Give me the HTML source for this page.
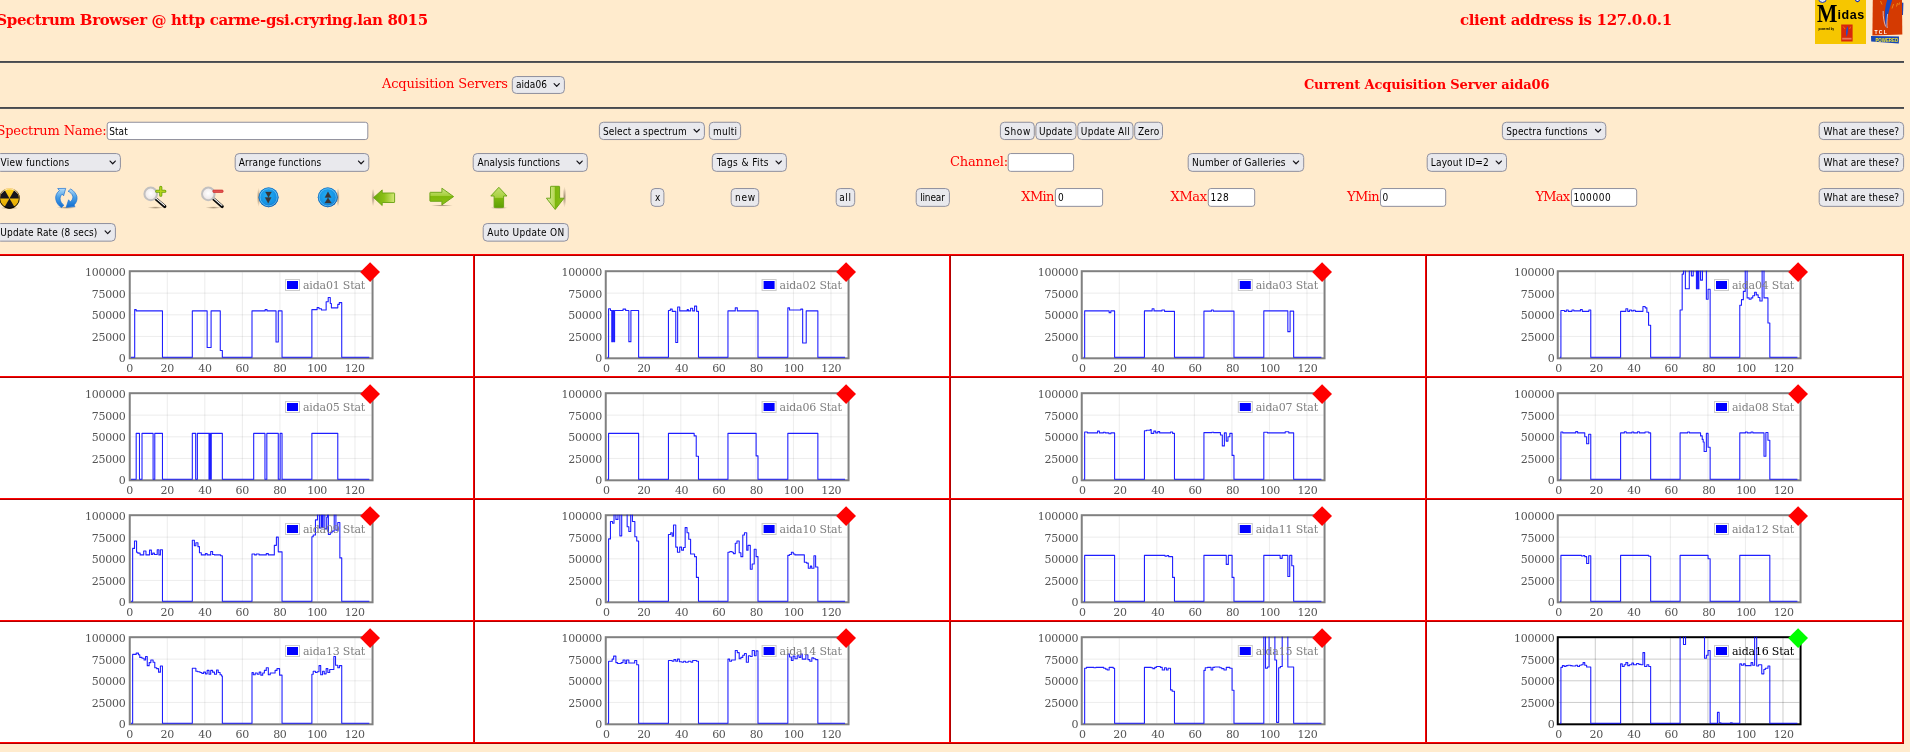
<!DOCTYPE html>
<html lang="en"><head><meta charset="utf-8"><title>Spectrum Browser</title>
<style>
html,body{margin:0;padding:0;}
body{background:#ffebcd;width:1910px;height:752px;overflow:hidden;position:relative;font-family:"DejaVu Serif","Liberation Serif",serif;color:#f00;}
.a{position:absolute;white-space:nowrap;}
.t{position:absolute;white-space:nowrap;color:#ff0000;font-family:"DejaVu Serif","Liberation Serif",serif;line-height:1;}
.hr{position:absolute;left:-4px;width:1907.8px;height:2px;background:linear-gradient(#48494d 50%,#55575b 50%);}
.c{position:absolute;box-sizing:border-box;}
.btn{background:#e9e9ed;border:1px solid #8f8f9d;border-radius:4px;}
.sel{background:#e9e9ed;border:1px solid #8f8f9d;border-radius:4px;}
.inp{background:#fff;border:1px solid #8f8f9d;border-radius:3px;}
.cell{position:absolute;background:#fff;}
.lab{position:absolute;font:11px "DejaVu Serif","Liberation Serif",serif;color:#545454;white-space:nowrap;line-height:13px;}
.leg{position:absolute;font:11px "DejaVu Serif","Liberation Serif",serif;white-space:nowrap;line-height:13px;}
</style></head><body>
<div id="wrap" style="position:absolute;left:0;top:0;width:1910px;height:752px;will-change:transform">

<div class="a" style="left:-3.7px;top:13px;font:bold 15px 'DejaVu Serif','Liberation Serif',serif;line-height:1;color:#ff0000;letter-spacing:-0.365px">Spectrum Browser @ http carme-gsi.cryring.lan 8015</div>
<div class="a" style="left:1459.9px;top:13px;font:bold 15px 'DejaVu Serif','Liberation Serif',serif;line-height:1;color:#ff0000;letter-spacing:-0.338px">client address is 127.0.0.1</div>
<div class="a" style="left:382px;top:77px;font:13px 'DejaVu Serif','Liberation Serif',serif;line-height:1;color:#ff0000;letter-spacing:-0.156px">Acquisition Servers</div>
<div class="a" style="left:1303.9px;top:78px;font:bold 13px 'DejaVu Serif','Liberation Serif',serif;line-height:1;color:#ff0000;letter-spacing:-0.131px">Current Acquisition Server aida06</div>
<div class="a" style="left:-3.6px;top:124px;font:13px 'DejaVu Serif','Liberation Serif',serif;line-height:1;color:#ff0000;letter-spacing:-0.138px">Spectrum Name:</div>
<div class="a" style="left:949.9px;top:155px;font:13px 'DejaVu Serif','Liberation Serif',serif;line-height:1;color:#ff0000;letter-spacing:-0.114px">Channel:</div>
<div class="a" style="left:1021.3px;top:190px;font:13px 'DejaVu Serif','Liberation Serif',serif;line-height:1;color:#ff0000;letter-spacing:-0.633px">XMin</div>
<div class="a" style="left:1170.5px;top:190px;font:13px 'DejaVu Serif','Liberation Serif',serif;line-height:1;color:#ff0000;letter-spacing:-0.367px">XMax</div>
<div class="a" style="left:1347.1px;top:190px;font:13px 'DejaVu Serif','Liberation Serif',serif;line-height:1;color:#ff0000;letter-spacing:-0.667px">YMin</div>
<div class="a" style="left:1535.4px;top:190px;font:13px 'DejaVu Serif','Liberation Serif',serif;line-height:1;color:#ff0000;letter-spacing:-0.767px">YMax</div>
<div class="hr" style="top:61px"></div>
<div class="hr" style="top:107px"></div>
<svg class="a" style="left:-4px;top:70px" width="1914" height="180" viewBox="-4 70 1914 180"><rect x="512.30" y="76.55" width="52.10" height="16.90" rx="4" fill="#e9e9ed" stroke="#8f8f9d" stroke-width="1"/><path d="M554.10 83.60 l2.6 2.7 l2.6 -2.7" fill="none" stroke="#15141a" stroke-width="1.2" stroke-linecap="round" stroke-linejoin="round"/><rect x="107.20" y="122.25" width="260.60" height="17.30" rx="2.5" fill="#fff" stroke="#8f8f9d" stroke-width="1"/><rect x="599.40" y="122.25" width="105.00" height="17.30" rx="4" fill="#e9e9ed" stroke="#8f8f9d" stroke-width="1"/><path d="M694.10 129.50 l2.6 2.7 l2.6 -2.7" fill="none" stroke="#15141a" stroke-width="1.2" stroke-linecap="round" stroke-linejoin="round"/><rect x="709.30" y="122.25" width="31.30" height="17.30" rx="4" fill="#e9e9ed" stroke="#8f8f9d" stroke-width="1"/><rect x="1000.40" y="122.25" width="33.90" height="17.30" rx="4" fill="#e9e9ed" stroke="#8f8f9d" stroke-width="1"/><rect x="1035.90" y="122.25" width="40.10" height="17.30" rx="4" fill="#e9e9ed" stroke="#8f8f9d" stroke-width="1"/><rect x="1077.80" y="122.25" width="55.20" height="17.30" rx="4" fill="#e9e9ed" stroke="#8f8f9d" stroke-width="1"/><rect x="1134.70" y="122.25" width="27.80" height="17.30" rx="4" fill="#e9e9ed" stroke="#8f8f9d" stroke-width="1"/><rect x="1502.40" y="122.25" width="103.40" height="17.30" rx="4" fill="#e9e9ed" stroke="#8f8f9d" stroke-width="1"/><path d="M1595.50 129.50 l2.6 2.7 l2.6 -2.7" fill="none" stroke="#15141a" stroke-width="1.2" stroke-linecap="round" stroke-linejoin="round"/><rect x="1819.20" y="122.25" width="84.40" height="17.30" rx="4" fill="#e9e9ed" stroke="#8f8f9d" stroke-width="1"/><rect x="-3.50" y="153.55" width="123.90" height="17.80" rx="4" fill="#e9e9ed" stroke="#8f8f9d" stroke-width="1"/><path d="M110.10 161.05 l2.6 2.7 l2.6 -2.7" fill="none" stroke="#15141a" stroke-width="1.2" stroke-linecap="round" stroke-linejoin="round"/><rect x="235.20" y="153.55" width="133.60" height="17.80" rx="4" fill="#e9e9ed" stroke="#8f8f9d" stroke-width="1"/><path d="M358.50 161.05 l2.6 2.7 l2.6 -2.7" fill="none" stroke="#15141a" stroke-width="1.2" stroke-linecap="round" stroke-linejoin="round"/><rect x="473.20" y="153.55" width="114.10" height="17.80" rx="4" fill="#e9e9ed" stroke="#8f8f9d" stroke-width="1"/><path d="M577.00 161.05 l2.6 2.7 l2.6 -2.7" fill="none" stroke="#15141a" stroke-width="1.2" stroke-linecap="round" stroke-linejoin="round"/><rect x="712.30" y="153.55" width="74.10" height="17.80" rx="4" fill="#e9e9ed" stroke="#8f8f9d" stroke-width="1"/><path d="M776.10 161.05 l2.6 2.7 l2.6 -2.7" fill="none" stroke="#15141a" stroke-width="1.2" stroke-linecap="round" stroke-linejoin="round"/><rect x="1008.20" y="153.55" width="65.40" height="17.80" rx="2.5" fill="#fff" stroke="#8f8f9d" stroke-width="1"/><rect x="1188.20" y="153.55" width="115.50" height="17.80" rx="4" fill="#e9e9ed" stroke="#8f8f9d" stroke-width="1"/><path d="M1293.40 161.05 l2.6 2.7 l2.6 -2.7" fill="none" stroke="#15141a" stroke-width="1.2" stroke-linecap="round" stroke-linejoin="round"/><rect x="1427.20" y="153.55" width="79.30" height="17.80" rx="4" fill="#e9e9ed" stroke="#8f8f9d" stroke-width="1"/><path d="M1496.20 161.05 l2.6 2.7 l2.6 -2.7" fill="none" stroke="#15141a" stroke-width="1.2" stroke-linecap="round" stroke-linejoin="round"/><rect x="1819.20" y="153.55" width="84.40" height="17.80" rx="4" fill="#e9e9ed" stroke="#8f8f9d" stroke-width="1"/><rect x="651.00" y="188.55" width="12.90" height="17.80" rx="4" fill="#e9e9ed" stroke="#8f8f9d" stroke-width="1"/><rect x="731.20" y="188.55" width="27.50" height="17.80" rx="4" fill="#e9e9ed" stroke="#8f8f9d" stroke-width="1"/><rect x="836.20" y="188.55" width="18.50" height="17.80" rx="4" fill="#e9e9ed" stroke="#8f8f9d" stroke-width="1"/><rect x="916.20" y="188.55" width="33.20" height="17.80" rx="4" fill="#e9e9ed" stroke="#8f8f9d" stroke-width="1"/><rect x="1055.40" y="188.55" width="47.20" height="17.80" rx="2.5" fill="#fff" stroke="#8f8f9d" stroke-width="1"/><rect x="1208.30" y="188.55" width="46.40" height="17.80" rx="2.5" fill="#fff" stroke="#8f8f9d" stroke-width="1"/><rect x="1380.50" y="188.55" width="65.20" height="17.80" rx="2.5" fill="#fff" stroke="#8f8f9d" stroke-width="1"/><rect x="1571.50" y="188.55" width="65.20" height="17.80" rx="2.5" fill="#fff" stroke="#8f8f9d" stroke-width="1"/><rect x="1819.20" y="188.55" width="84.40" height="17.80" rx="4" fill="#e9e9ed" stroke="#8f8f9d" stroke-width="1"/><rect x="-3.50" y="223.55" width="118.90" height="17.60" rx="4" fill="#e9e9ed" stroke="#8f8f9d" stroke-width="1"/><path d="M105.10 230.95 l2.6 2.7 l2.6 -2.7" fill="none" stroke="#15141a" stroke-width="1.2" stroke-linecap="round" stroke-linejoin="round"/><rect x="483.20" y="223.55" width="85.10" height="17.60" rx="4" fill="#e9e9ed" stroke="#8f8f9d" stroke-width="1"/></svg>
<div class="a" style="left:516px;top:80px;font:10px 'DejaVu Sans Condensed','DejaVu Sans','Liberation Sans',sans-serif;line-height:1;color:#000000;letter-spacing:0.04px">aida06</div>
<div class="a" style="left:109.2px;top:127px;font:10px 'DejaVu Sans Condensed','DejaVu Sans','Liberation Sans',sans-serif;line-height:1;color:#000000;letter-spacing:0.067px">Stat</div>
<div class="a" style="left:602.9px;top:127px;font:10px 'DejaVu Sans Condensed','DejaVu Sans','Liberation Sans',sans-serif;line-height:1;color:#000000;letter-spacing:0.138px">Select a spectrum</div>
<div class="a" style="left:713px;top:127px;font:10px 'DejaVu Sans Condensed','DejaVu Sans','Liberation Sans',sans-serif;line-height:1;color:#000000;letter-spacing:0.225px">multi</div>
<div class="a" style="left:1004.3px;top:127px;font:10px 'DejaVu Sans Condensed','DejaVu Sans','Liberation Sans',sans-serif;line-height:1;color:#000000;letter-spacing:0.567px">Show</div>
<div class="a" style="left:1038.9px;top:127px;font:10px 'DejaVu Sans Condensed','DejaVu Sans','Liberation Sans',sans-serif;line-height:1;color:#000000;letter-spacing:0.18px">Update</div>
<div class="a" style="left:1080.8px;top:127px;font:10px 'DejaVu Sans Condensed','DejaVu Sans','Liberation Sans',sans-serif;line-height:1;color:#000000;letter-spacing:0.267px">Update All</div>
<div class="a" style="left:1138px;top:127px;font:10px 'DejaVu Sans Condensed','DejaVu Sans','Liberation Sans',sans-serif;line-height:1;color:#000000;letter-spacing:0.167px">Zero</div>
<div class="a" style="left:1506.2px;top:127px;font:10px 'DejaVu Sans Condensed','DejaVu Sans','Liberation Sans',sans-serif;line-height:1;color:#000000;letter-spacing:0.15px">Spectra functions</div>
<div class="a" style="left:1823.5px;top:127px;font:10px 'DejaVu Sans Condensed','DejaVu Sans','Liberation Sans',sans-serif;line-height:1;color:#000000;letter-spacing:0.143px">What are these?</div>
<div class="a" style="left:0.6px;top:158px;font:10px 'DejaVu Sans Condensed','DejaVu Sans','Liberation Sans',sans-serif;line-height:1;color:#000000;letter-spacing:0.231px">View functions</div>
<div class="a" style="left:238.7px;top:158px;font:10px 'DejaVu Sans Condensed','DejaVu Sans','Liberation Sans',sans-serif;line-height:1;color:#000000;letter-spacing:0.15px">Arrange functions</div>
<div class="a" style="left:477.5px;top:158px;font:10px 'DejaVu Sans Condensed','DejaVu Sans','Liberation Sans',sans-serif;line-height:1;color:#000000;letter-spacing:0.059px">Analysis functions</div>
<div class="a" style="left:716.8px;top:158px;font:10px 'DejaVu Sans Condensed','DejaVu Sans','Liberation Sans',sans-serif;line-height:1;color:#000000;letter-spacing:0.41px">Tags &amp; Fits</div>
<div class="a" style="left:1192.1px;top:158px;font:10px 'DejaVu Sans Condensed','DejaVu Sans','Liberation Sans',sans-serif;line-height:1;color:#000000;letter-spacing:0.194px">Number of Galleries</div>
<div class="a" style="left:1430.8px;top:158px;font:10px 'DejaVu Sans Condensed','DejaVu Sans','Liberation Sans',sans-serif;line-height:1;color:#000000;letter-spacing:0.16px">Layout ID=2</div>
<div class="a" style="left:1823.5px;top:158px;font:10px 'DejaVu Sans Condensed','DejaVu Sans','Liberation Sans',sans-serif;line-height:1;color:#000000;letter-spacing:0.143px">What are these?</div>
<div class="a" style="left:655px;top:193px;font:10px 'DejaVu Sans Condensed','DejaVu Sans','Liberation Sans',sans-serif;line-height:1;color:#000000;letter-spacing:0px">x</div>
<div class="a" style="left:735px;top:193px;font:10px 'DejaVu Sans Condensed','DejaVu Sans','Liberation Sans',sans-serif;line-height:1;color:#000000;letter-spacing:0.7px">new</div>
<div class="a" style="left:839.3px;top:193px;font:10px 'DejaVu Sans Condensed','DejaVu Sans','Liberation Sans',sans-serif;line-height:1;color:#000000;letter-spacing:0.55px">all</div>
<div class="a" style="left:920.2px;top:193px;font:10px 'DejaVu Sans Condensed','DejaVu Sans','Liberation Sans',sans-serif;line-height:1;color:#000000;letter-spacing:-0.16px">linear</div>
<div class="a" style="left:1057.9px;top:193px;font:10px 'DejaVu Sans Condensed','DejaVu Sans','Liberation Sans',sans-serif;line-height:1;color:#000000;letter-spacing:0px">0</div>
<div class="a" style="left:1210.4px;top:193px;font:10px 'DejaVu Sans Condensed','DejaVu Sans','Liberation Sans',sans-serif;line-height:1;color:#000000;letter-spacing:0.55px">128</div>
<div class="a" style="left:1382.5px;top:193px;font:10px 'DejaVu Sans Condensed','DejaVu Sans','Liberation Sans',sans-serif;line-height:1;color:#000000;letter-spacing:0px">0</div>
<div class="a" style="left:1573.6px;top:193px;font:10px 'DejaVu Sans Condensed','DejaVu Sans','Liberation Sans',sans-serif;line-height:1;color:#000000;letter-spacing:0.54px">100000</div>
<div class="a" style="left:1823.5px;top:193px;font:10px 'DejaVu Sans Condensed','DejaVu Sans','Liberation Sans',sans-serif;line-height:1;color:#000000;letter-spacing:0.143px">What are these?</div>
<div class="a" style="left:0.3px;top:228px;font:10px 'DejaVu Sans Condensed','DejaVu Sans','Liberation Sans',sans-serif;line-height:1;color:#000000;letter-spacing:0.142px">Update Rate (8 secs)</div>
<div class="a" style="left:487.3px;top:228px;font:10px 'DejaVu Sans Condensed','DejaVu Sans','Liberation Sans',sans-serif;line-height:1;color:#000000;letter-spacing:0.3px">Auto Update ON</div>
<svg class="a" style="left:-4px;top:180px" width="580" height="36" viewBox="-4 180 580 36">
<defs>
<radialGradient id="gsh" cx="0.5" cy="0.5" r="0.5"><stop offset="0" stop-color="#5a4630" stop-opacity="0.55"/><stop offset="1" stop-color="#5a4630" stop-opacity="0"/></radialGradient>
<linearGradient id="gy" x1="0" y1="0" x2="0" y2="1"><stop offset="0" stop-color="#ffd21a"/><stop offset="1" stop-color="#e2a500"/></linearGradient>
<radialGradient id="gbl" cx="0.45" cy="0.4" r="0.6"><stop offset="0" stop-color="#22aef5"/><stop offset="0.75" stop-color="#1590e2"/><stop offset="1" stop-color="#0b62b8"/></radialGradient>
<linearGradient id="grf" x1="0" y1="0" x2="0" y2="1"><stop offset="0" stop-color="#b4dcf8"/><stop offset="0.45" stop-color="#4aa0e6"/><stop offset="1" stop-color="#0f6cd0"/></linearGradient>
<linearGradient id="ggl" x1="0" y1="0" x2="1" y2="0"><stop offset="0" stop-color="#6aa908"/><stop offset="0.5" stop-color="#8cc018"/><stop offset="1" stop-color="#d5e878"/></linearGradient>
<linearGradient id="ggr" x1="0" y1="0" x2="0" y2="1"><stop offset="0" stop-color="#cfe48a"/><stop offset="0.45" stop-color="#a5cf3a"/><stop offset="0.5" stop-color="#7fb80a"/><stop offset="1" stop-color="#8cc21c"/></linearGradient>
<linearGradient id="ggu" x1="0" y1="0" x2="0" y2="1"><stop offset="0" stop-color="#c4e070"/><stop offset="0.5" stop-color="#a8d040"/><stop offset="0.55" stop-color="#7cb60c"/><stop offset="1" stop-color="#5fa005"/></linearGradient>
<linearGradient id="ggd" x1="0" y1="0" x2="1" y2="0"><stop offset="0" stop-color="#d8eba0"/><stop offset="0.45" stop-color="#b8d858"/><stop offset="0.5" stop-color="#7cb60c"/><stop offset="1" stop-color="#8cc21c"/></linearGradient>
<radialGradient id="glens" cx="0.5" cy="0.45" r="0.55"><stop offset="0" stop-color="#ffffff"/><stop offset="0.7" stop-color="#f1ecec"/><stop offset="1" stop-color="#e0dcdc"/></radialGradient>
<linearGradient id="gvs" x1="0" y1="0" x2="1" y2="0"><stop offset="0" stop-color="#4a3a2a" stop-opacity="0"/><stop offset="0.5" stop-color="#4a3a2a" stop-opacity="0.38"/><stop offset="1" stop-color="#4a3a2a" stop-opacity="0"/></linearGradient>
</defs>
<!-- radiation -->
<ellipse cx="9.5" cy="208" rx="9" ry="1.6" fill="url(#gsh)"/>
<circle cx="9.5" cy="198.4" r="10.2" fill="url(#gy)"/>
<g fill="#15151c">
<path d="M9.5 198.4 L19.7 198.4 A10.2 10.2 0 0 0 14.6 189.57Z"/>
<path d="M9.5 198.4 L4.4 189.57 A10.2 10.2 0 0 0 -0.7 198.4Z"/>
<path d="M9.5 198.4 L4.4 207.23 A10.2 10.2 0 0 0 14.6 207.23Z"/>
</g>
<linearGradient id="grim" x1="0" y1="0" x2="0" y2="1"><stop offset="0" stop-color="#f6c060"/><stop offset="0.45" stop-color="#8a6a20"/><stop offset="0.6" stop-color="#1a1a1a"/><stop offset="1" stop-color="#000"/></linearGradient><circle cx="9.5" cy="198.4" r="9.8" fill="none" stroke="url(#grim)" stroke-width="1"/>
<path d="M1.5 193.5 A9.3 9.3 0 0 1 17.5 193.5" fill="none" stroke="#fff" stroke-opacity="0.55" stroke-width="1"/>
<!-- refresh -->
<ellipse cx="66.5" cy="207.6" rx="10" ry="1.3" fill="url(#gsh)"/>
<g stroke="#1a70d2" stroke-width="0.7" stroke-linejoin="round" fill="url(#grf)">
<path d="M57.7 188.5 L65.7 188.4 L63.6 195.8 L62.2 194.1 C60.6 195.6 59.9 198 60.1 199 C60.3 201.5 61.8 203.8 63.9 205.2 L61.5 207.6 C58.5 205.6 56.5 203 55.8 199.5 C55.2 196 56.5 192.8 59.4 190.6Z"/>
<path d="M68.1 191.3 L70.7 189 C73.5 190.5 76 193.5 76.9 196.5 C77.5 199.8 76.3 203 74 205 L74.9 206.6 L66.2 207.3 L68.6 199.8 L70.2 201.9 C72.3 200.2 73.2 198.2 72.8 196.5 C72.3 194.2 70.5 192.3 68.1 191.3Z"/>
</g>
<!-- zoom in -->
<ellipse cx="155.5" cy="207.6" rx="8" ry="1.3" fill="url(#gsh)"/>
<path d="M155.6 198.6 L164.8 206.5" stroke="#0a0a0a" stroke-width="3.2" stroke-linecap="round"/>
<path d="M155.6 197.9 L164.5 205.4" stroke="#ffffff" stroke-width="1.1" stroke-linecap="round"/>
<circle cx="150.7" cy="193.9" r="6.3" fill="url(#glens)" stroke="#c2c0c0" stroke-width="2"/>
<path d="M160.78 187.2 V195.3 M156.7 191.25 H164.85" stroke="#6aa30a" stroke-width="3.1" stroke-linecap="round"/>
<path d="M160.78 187.3 V195.2 M156.8 191.25 H164.75" stroke="#b4d21c" stroke-width="1.5" stroke-linecap="round"/>
<!-- zoom out -->
<ellipse cx="213.5" cy="207.6" rx="8" ry="1.3" fill="url(#gsh)"/>
<path d="M213.2 198.6 L222.2 206.5" stroke="#0a0a0a" stroke-width="3.2" stroke-linecap="round"/>
<path d="M213.2 197.9 L221.9 205.4" stroke="#ffffff" stroke-width="1.1" stroke-linecap="round"/>
<circle cx="208.3" cy="193.9" r="6.3" fill="url(#glens)" stroke="#c2c0c0" stroke-width="2"/>
<rect x="212.8" y="190" width="10.4" height="2.5" rx="1.1" fill="#e25050" stroke="#c82020" stroke-width="0.6"/>
<!-- down circle -->
<ellipse cx="258.6" cy="197.3" rx="1.7" ry="9.5" fill="url(#gsh)"/>
<circle cx="268.6" cy="197.3" r="9.9" fill="url(#gbl)"/>
<circle cx="268.6" cy="197.3" r="9.5" fill="none" stroke="#0a5cb0" stroke-opacity="0.75" stroke-width="0.8"/><circle cx="268.6" cy="197.3" r="8.6" fill="none" stroke="#8ad6fc" stroke-opacity="0.75" stroke-width="0.8"/>
<path d="M265.5 191.9 H271.5 L268.5 197.5Z M265.1 197.5 H271.2 L268.2 203.3Z" fill="#3a3636" stroke="#3a3636" stroke-width="0.3"/>
<!-- up circle -->
<ellipse cx="338" cy="197.3" rx="1.7" ry="9.5" fill="url(#gsh)"/>
<circle cx="327.75" cy="197.3" r="9.9" fill="url(#gbl)"/>
<circle cx="327.75" cy="197.3" r="9.5" fill="none" stroke="#0a5cb0" stroke-opacity="0.75" stroke-width="0.8"/><circle cx="327.75" cy="197.3" r="8.6" fill="none" stroke="#8ad6fc" stroke-opacity="0.75" stroke-width="0.8"/>
<path d="M328 191.8 L331.2 197.4 H324.9Z M328 197.8 L331.4 203.1 H324.8Z" fill="#3a3636" stroke="#3a3636" stroke-width="0.3"/>
<!-- left arrow -->
<ellipse cx="373.1" cy="197.5" rx="1.8" ry="9" fill="url(#gsh)"/>
<path d="M373.6 197.6 L382.2 189.9 V193 H394.2 Q394.6 193 394.6 193.5 V202 Q394.6 202.5 394.2 202.5 H382.2 V205.5Z" fill="url(#ggl)" stroke="#66a010" stroke-width="0.9" stroke-linejoin="round"/>
<!-- right arrow -->
<ellipse cx="442" cy="205.6" rx="11" ry="1" fill="url(#gsh)"/>
<path d="M453.6 196.6 L441.9 188.2 V192.3 H430.4 Q429.9 192.3 429.9 192.8 V200.8 Q429.9 201.3 430.4 201.3 H441.9 V204.9Z" fill="url(#ggr)" stroke="#66a010" stroke-width="0.9" stroke-linejoin="round"/>
<!-- up arrow -->
<ellipse cx="499" cy="207.8" rx="9" ry="1.3" fill="url(#gsh)"/>
<path d="M498.85 187.3 L507 196 H503.6 V207 Q503.6 207.4 503.2 207.4 H494.5 Q494.1 207.4 494.1 207 V196 H490.8Z" fill="url(#ggu)" stroke="#66a010" stroke-width="0.9" stroke-linejoin="round"/>
<!-- down arrow -->
<ellipse cx="564.5" cy="197" rx="1.8" ry="10.5" fill="url(#gsh)"/>
<path d="M555.2 209.5 L546.4 198.2 H550.5 V186.7 Q550.5 186.3 550.9 186.3 H559.2 Q559.6 186.3 559.6 186.7 V198.2 H564Z" fill="url(#ggd)" stroke="#66a010" stroke-width="0.9" stroke-linejoin="round"/>
</svg>

<div class="a" style="left:1815px;top:0;width:51px;height:44px;background:#f6c600;overflow:hidden">
<div class="a" style="left:2.5px;top:-6.5px;width:9.5px;height:9.5px;border-radius:50%;background:#e8ecf6;border:1.6px solid #1830b0;box-sizing:border-box"></div>
<div class="a" style="left:40px;top:-3px;width:5px;height:5px;border-radius:50%;background:#e8ecf6;border:1.2px solid #1830b0;box-sizing:border-box;transform:rotate(45deg)"></div>
<div class="a" style="left:2.4px;top:1px;font:bold 24.8px/26px 'Liberation Serif','DejaVu Serif',serif;color:#000;transform:scaleX(0.87);transform-origin:0 0;">M</div>
<div class="a" style="left:22.4px;top:8.3px;font:bold 12.5px/14px 'Liberation Sans','DejaVu Sans',sans-serif;color:#000;letter-spacing:0.6px">idas</div>
<div class="a" style="left:3.5px;top:27.1px;font:bold 2.8px/5px 'Liberation Sans','DejaVu Sans',sans-serif;color:#000;">powered by</div>
<svg class="a" style="left:26px;top:24px" width="12" height="18" viewBox="0 0 12 18"><rect x="0.2" y="0.5" width="11.4" height="17" fill="#d8280a"/><path d="M6.8 2 C4.5 5 4.6 9 5.6 13 C6.6 10 7.6 6 6.8 2Z" fill="#2a4cc0"/><path d="M2.2 2.5 L4 5 M9.8 2.5 L8.6 5" stroke="#f2a020" stroke-width="0.6"/><rect x="1.2" y="13.8" width="9.4" height="1.8" fill="#e8785a"/></svg>
</div>
<svg class="a" style="left:1868px;top:0" width="40" height="46" viewBox="1868 0 40 46">
<path d="M1901.2 2.5 L1903.4 2.8 L1903 15 L1901.4 15Z" fill="#1a44b8"/>
<path d="M1872.8 0 H1902 L1902.3 34.6 L1872.4 35.6Z" fill="#d43a02"/>
<path d="M1871 36 L1899 36.6 L1898.8 43.6 L1871.2 41.4Z" fill="#1546b4"/>
<path d="M1887.2 0 C1884.6 8 1883.8 18 1886.3 28.5 C1886.8 20 1888.6 10 1892.2 0Z" fill="#1a48c0"/>
<path d="M1883.2 11 C1883 17 1884 22 1885.6 26.5 M1887.6 14 C1886.8 20 1886.8 25 1887.2 28" stroke="#e8e4f0" stroke-width="0.7" fill="none"/>
<path d="M1880.5 1 L1882 4.5 M1893.5 4 L1892 8.5 M1897.5 3 L1896.5 6.5 M1899.5 2.5 L1898.8 5" stroke="#f29a1a" stroke-width="0.8" fill="none"/>
<text x="1874.4" y="33.6" font-family="'Liberation Sans','DejaVu Sans',sans-serif" font-weight="bold" font-size="5" fill="#fff" textLength="12.4" lengthAdjust="spacing">TCL</text>
<text x="1875.4" y="41.6" font-family="'Liberation Sans','DejaVu Sans',sans-serif" font-weight="bold" font-size="6" fill="#f8e828" textLength="22.7" lengthAdjust="spacingAndGlyphs">POWERED</text>
</svg>

<div class="a" style="left:-4px;top:254px;width:1908px;height:490px;background:#b00000"></div>
<div class="a" style="left:-4px;top:254px;width:1908px;height:490px;background:#ff0000"></div>
<div class="a" style="left:-2px;top:255px;width:475px;height:121px;background:#b20000"></div>
<div class="a" style="left:-1px;top:256px;width:475px;height:121px;background:#ff0000"></div>
<div class="cell" style="left:-1px;top:256px;width:474px;height:120px"></div>
<div class="a" style="left:474px;top:255px;width:475px;height:121px;background:#b20000"></div>
<div class="a" style="left:475px;top:256px;width:475px;height:121px;background:#ff0000"></div>
<div class="cell" style="left:475px;top:256px;width:474px;height:120px"></div>
<div class="a" style="left:950px;top:255px;width:475px;height:121px;background:#b20000"></div>
<div class="a" style="left:951px;top:256px;width:475px;height:121px;background:#ff0000"></div>
<div class="cell" style="left:951px;top:256px;width:474px;height:120px"></div>
<div class="a" style="left:1426px;top:255px;width:476px;height:121px;background:#b20000"></div>
<div class="a" style="left:1427px;top:256px;width:476px;height:121px;background:#ff0000"></div>
<div class="cell" style="left:1427px;top:256px;width:475px;height:120px"></div>
<div class="a" style="left:-2px;top:377px;width:475px;height:121px;background:#b20000"></div>
<div class="a" style="left:-1px;top:378px;width:475px;height:121px;background:#ff0000"></div>
<div class="cell" style="left:-1px;top:378px;width:474px;height:120px"></div>
<div class="a" style="left:474px;top:377px;width:475px;height:121px;background:#b20000"></div>
<div class="a" style="left:475px;top:378px;width:475px;height:121px;background:#ff0000"></div>
<div class="cell" style="left:475px;top:378px;width:474px;height:120px"></div>
<div class="a" style="left:950px;top:377px;width:475px;height:121px;background:#b20000"></div>
<div class="a" style="left:951px;top:378px;width:475px;height:121px;background:#ff0000"></div>
<div class="cell" style="left:951px;top:378px;width:474px;height:120px"></div>
<div class="a" style="left:1426px;top:377px;width:476px;height:121px;background:#b20000"></div>
<div class="a" style="left:1427px;top:378px;width:476px;height:121px;background:#ff0000"></div>
<div class="cell" style="left:1427px;top:378px;width:475px;height:120px"></div>
<div class="a" style="left:-2px;top:499px;width:475px;height:121px;background:#b20000"></div>
<div class="a" style="left:-1px;top:500px;width:475px;height:121px;background:#ff0000"></div>
<div class="cell" style="left:-1px;top:500px;width:474px;height:120px"></div>
<div class="a" style="left:474px;top:499px;width:475px;height:121px;background:#b20000"></div>
<div class="a" style="left:475px;top:500px;width:475px;height:121px;background:#ff0000"></div>
<div class="cell" style="left:475px;top:500px;width:474px;height:120px"></div>
<div class="a" style="left:950px;top:499px;width:475px;height:121px;background:#b20000"></div>
<div class="a" style="left:951px;top:500px;width:475px;height:121px;background:#ff0000"></div>
<div class="cell" style="left:951px;top:500px;width:474px;height:120px"></div>
<div class="a" style="left:1426px;top:499px;width:476px;height:121px;background:#b20000"></div>
<div class="a" style="left:1427px;top:500px;width:476px;height:121px;background:#ff0000"></div>
<div class="cell" style="left:1427px;top:500px;width:475px;height:120px"></div>
<div class="a" style="left:-2px;top:621px;width:475px;height:121px;background:#b20000"></div>
<div class="a" style="left:-1px;top:622px;width:475px;height:121px;background:#ff0000"></div>
<div class="cell" style="left:-1px;top:622px;width:474px;height:120px"></div>
<div class="a" style="left:474px;top:621px;width:475px;height:121px;background:#b20000"></div>
<div class="a" style="left:475px;top:622px;width:475px;height:121px;background:#ff0000"></div>
<div class="cell" style="left:475px;top:622px;width:474px;height:120px"></div>
<div class="a" style="left:950px;top:621px;width:475px;height:121px;background:#b20000"></div>
<div class="a" style="left:951px;top:622px;width:475px;height:121px;background:#ff0000"></div>
<div class="cell" style="left:951px;top:622px;width:474px;height:120px"></div>
<div class="a" style="left:1426px;top:621px;width:476px;height:121px;background:#b20000"></div>
<div class="a" style="left:1427px;top:622px;width:476px;height:121px;background:#ff0000"></div>
<div class="cell" style="left:1427px;top:622px;width:475px;height:120px"></div>
<div class="a" style="left:-4px;top:743px;width:1908px;height:1px;background:#b20000"></div>
<div class="a" style="left:1903px;top:254px;width:1px;height:490px;background:#b20000"></div>
<svg class="a" style="left:100px;top:258px" width="290" height="104" viewBox="0.25 0 290 104"><path d="M67.54 14.2 V99.3 M105.08 14.2 V99.3 M142.62 14.2 V99.3 M180.16 14.2 V99.3 M217.70 14.2 V99.3 M255.24 14.2 V99.3 M31 78.44 H271.8 M31 56.79 H271.8 M31 35.14 H271.8" stroke="rgba(120,120,120,0.14)" stroke-width="1" fill="none"/><rect x="30" y="13.2" width="242.8" height="87.1" fill="none" stroke="#808080" stroke-width="2"/><clipPath id="cp1"><rect x="31" y="12.7" width="241" height="88.2"/></clipPath><path d="M30.00 99.30H34.69 V51.60H36.19 V52.89H62.47 V99.30H92.32 V52.89H107.14 V89.52H111.09 V52.89H120.28 V92.55H122.35 V99.30H152.00 V52.89H165.14 V51.60H167.02 V52.89H176.03 V84.06H178.28 V52.89H182.04 V99.30H211.88 V51.60H217.14 V49.43H219.01 V50.73H221.45 V52.03H226.15 V43.80H228.21 V39.47H230.28 V45.53H231.40 V49.86H237.78 V46.40H239.29 V44.67H241.73 V99.30H269.32" stroke="#0000ff" stroke-opacity="0.88" stroke-width="1.1" fill="none" stroke-linejoin="round" clip-path="url(#cp1)" transform="translate(0.25 0)"/><g transform="translate(0.25 0)"><rect x="185.5" y="21.5" width="14" height="11" fill="#fff" stroke="#ccc" stroke-width="1"/><rect x="187" y="23" width="11" height="8" fill="#0000ff"/></g><path d="M270.35 4.2 L280.25 14.1 L270.35 24 L260.45 14.1Z" fill="#ff0000"/></svg>
<div class="lab" style="left:85.00px;top:267.00px;letter-spacing:-0.26px;line-height:1">100000</div>
<div class="lab" style="left:91.74px;top:288.50px;letter-spacing:-0.26px;line-height:1">75000</div>
<div class="lab" style="left:91.74px;top:310.00px;letter-spacing:-0.26px;line-height:1">50000</div>
<div class="lab" style="left:91.74px;top:331.50px;letter-spacing:-0.26px;line-height:1">25000</div>
<div class="lab" style="left:118.70px;top:353.00px;letter-spacing:-0.26px;line-height:1">0</div>
<div class="lab" style="left:126.30px;top:363px;letter-spacing:-0.4px;line-height:1">0</div>
<div class="lab" style="left:160.54px;top:363px;letter-spacing:-0.4px;line-height:1">20</div>
<div class="lab" style="left:198.33px;top:363px;letter-spacing:-0.4px;line-height:1">40</div>
<div class="lab" style="left:235.62px;top:363px;letter-spacing:-0.4px;line-height:1">60</div>
<div class="lab" style="left:273.16px;top:363px;letter-spacing:-0.4px;line-height:1">80</div>
<div class="lab" style="left:307.15px;top:363px;letter-spacing:-0.4px;line-height:1">100</div>
<div class="lab" style="left:344.69px;top:363px;letter-spacing:-0.4px;line-height:1">120</div>
<div class="leg" style="left:302.9px;top:280px;color:#808080;letter-spacing:-0.17px;line-height:1">aida01 Stat</div>
<svg class="a" style="left:576px;top:258px" width="290" height="104" viewBox="0.25 0 290 104"><path d="M67.54 14.2 V99.3 M105.08 14.2 V99.3 M142.62 14.2 V99.3 M180.16 14.2 V99.3 M217.70 14.2 V99.3 M255.24 14.2 V99.3 M31 78.44 H271.8 M31 56.79 H271.8 M31 35.14 H271.8" stroke="rgba(120,120,120,0.14)" stroke-width="1" fill="none"/><rect x="30" y="13.2" width="242.8" height="87.1" fill="none" stroke="#808080" stroke-width="2"/><clipPath id="cp2"><rect x="31" y="12.7" width="241" height="88.2"/></clipPath><path d="M30.00 99.30H32.06 V50.73H33.94 V52.46H35.26 V83.63H36.10 V52.46H37.23 V83.63H38.07 V52.46H46.52 V51.16H49.15 V52.46H52.34 V83.63H54.40 V52.46H62.10 V99.30H91.94 V52.46H93.82 V51.16H95.69 V53.33H99.26 V84.50H101.14 V49.00H103.20 V52.89H110.71 V51.60H111.84 V52.89H114.09 V50.30H116.15 V52.89H118.03 V48.13H120.10 V53.33H121.97 V99.30H151.44 V52.89H158.76 V49.86H160.83 V52.89H181.47 V99.30H211.32 V49.86H213.01 V52.03H224.27 V51.16H226.15 V84.93H229.71 V52.89H241.35 V99.30H268.57" stroke="#0000ff" stroke-opacity="0.88" stroke-width="1.1" fill="none" stroke-linejoin="round" clip-path="url(#cp2)" transform="translate(0.76 0)"/><g transform="translate(0.85 0)"><rect x="185.5" y="21.5" width="14" height="11" fill="#fff" stroke="#ccc" stroke-width="1"/><rect x="187" y="23" width="11" height="8" fill="#0000ff"/></g><path d="M270.35 4.2 L280.25 14.1 L270.35 24 L260.45 14.1Z" fill="#ff0000"/></svg>
<div class="lab" style="left:561.60px;top:267.00px;letter-spacing:-0.26px;line-height:1">100000</div>
<div class="lab" style="left:568.34px;top:288.50px;letter-spacing:-0.26px;line-height:1">75000</div>
<div class="lab" style="left:568.34px;top:310.00px;letter-spacing:-0.26px;line-height:1">50000</div>
<div class="lab" style="left:568.34px;top:331.50px;letter-spacing:-0.26px;line-height:1">25000</div>
<div class="lab" style="left:595.30px;top:353.00px;letter-spacing:-0.26px;line-height:1">0</div>
<div class="lab" style="left:602.90px;top:363px;letter-spacing:-0.4px;line-height:1">0</div>
<div class="lab" style="left:637.14px;top:363px;letter-spacing:-0.4px;line-height:1">20</div>
<div class="lab" style="left:674.93px;top:363px;letter-spacing:-0.4px;line-height:1">40</div>
<div class="lab" style="left:712.22px;top:363px;letter-spacing:-0.4px;line-height:1">60</div>
<div class="lab" style="left:749.76px;top:363px;letter-spacing:-0.4px;line-height:1">80</div>
<div class="lab" style="left:783.75px;top:363px;letter-spacing:-0.4px;line-height:1">100</div>
<div class="lab" style="left:821.29px;top:363px;letter-spacing:-0.4px;line-height:1">120</div>
<div class="leg" style="left:779.5px;top:280px;color:#808080;letter-spacing:-0.17px;line-height:1">aida02 Stat</div>
<svg class="a" style="left:1052px;top:258px" width="290" height="104" viewBox="0.25 0 290 104"><path d="M67.54 14.2 V99.3 M105.08 14.2 V99.3 M142.62 14.2 V99.3 M180.16 14.2 V99.3 M217.70 14.2 V99.3 M255.24 14.2 V99.3 M31 78.44 H271.8 M31 56.79 H271.8 M31 35.14 H271.8" stroke="rgba(120,120,120,0.14)" stroke-width="1" fill="none"/><rect x="30" y="13.2" width="242.8" height="87.1" fill="none" stroke="#808080" stroke-width="2"/><clipPath id="cp3"><rect x="31" y="12.7" width="241" height="88.2"/></clipPath><path d="M30.00 99.30H31.97 V52.89H56.47 V54.63H58.16 V52.89H61.91 V99.30H91.75 V52.89H99.45 V50.73H101.33 V52.89H109.21 V52.03H111.84 V53.33H121.79 V99.30H151.25 V53.15H158.76 V52.03H160.64 V53.15H181.29 V99.30H211.13 V52.89H235.16 V73.67H237.41 V53.15H240.97 V99.30H268.75" stroke="#0000ff" stroke-opacity="0.88" stroke-width="1.1" fill="none" stroke-linejoin="round" clip-path="url(#cp3)" transform="translate(0.93 0)"/><g transform="translate(1.05 0)"><rect x="185.5" y="21.5" width="14" height="11" fill="#fff" stroke="#ccc" stroke-width="1"/><rect x="187" y="23" width="11" height="8" fill="#0000ff"/></g><path d="M270.35 4.2 L280.25 14.1 L270.35 24 L260.45 14.1Z" fill="#ff0000"/></svg>
<div class="lab" style="left:1037.80px;top:267.00px;letter-spacing:-0.26px;line-height:1">100000</div>
<div class="lab" style="left:1044.54px;top:288.50px;letter-spacing:-0.26px;line-height:1">75000</div>
<div class="lab" style="left:1044.54px;top:310.00px;letter-spacing:-0.26px;line-height:1">50000</div>
<div class="lab" style="left:1044.54px;top:331.50px;letter-spacing:-0.26px;line-height:1">25000</div>
<div class="lab" style="left:1071.50px;top:353.00px;letter-spacing:-0.26px;line-height:1">0</div>
<div class="lab" style="left:1079.10px;top:363px;letter-spacing:-0.4px;line-height:1">0</div>
<div class="lab" style="left:1113.34px;top:363px;letter-spacing:-0.4px;line-height:1">20</div>
<div class="lab" style="left:1151.13px;top:363px;letter-spacing:-0.4px;line-height:1">40</div>
<div class="lab" style="left:1188.42px;top:363px;letter-spacing:-0.4px;line-height:1">60</div>
<div class="lab" style="left:1225.96px;top:363px;letter-spacing:-0.4px;line-height:1">80</div>
<div class="lab" style="left:1259.95px;top:363px;letter-spacing:-0.4px;line-height:1">100</div>
<div class="lab" style="left:1297.49px;top:363px;letter-spacing:-0.4px;line-height:1">120</div>
<div class="leg" style="left:1255.7px;top:280px;color:#808080;letter-spacing:-0.17px;line-height:1">aida03 Stat</div>
<svg class="a" style="left:1528px;top:258px" width="290" height="104" viewBox="0.25 0 290 104"><path d="M67.54 14.2 V99.3 M105.08 14.2 V99.3 M142.62 14.2 V99.3 M180.16 14.2 V99.3 M217.70 14.2 V99.3 M255.24 14.2 V99.3 M31 78.44 H271.8 M31 56.79 H271.8 M31 35.14 H271.8" stroke="rgba(120,120,120,0.14)" stroke-width="1" fill="none"/><rect x="30" y="13.2" width="242.8" height="87.1" fill="none" stroke="#808080" stroke-width="2"/><clipPath id="cp4"><rect x="31" y="12.7" width="241" height="88.2"/></clipPath><path d="M30.00 99.30H32.06 V52.46H35.63 V53.33H37.51 V52.03H39.38 V53.33H43.14 V52.03H45.02 V52.89H51.59 V51.60H53.46 V53.33H60.03 V52.03H61.91 V99.30H91.75 V53.33H97.01 V50.73H98.89 V53.33H100.76 V52.03H102.64 V52.89H104.52 V52.29H106.39 V53.33H114.09 V48.56H116.34 V49.86H118.03 V54.19H119.72 V67.18H121.79 V99.30H151.25 V52.03H153.32 V16.10H154.63 V-12.47H156.51 V30.82H160.45 V-12.47H162.52 V17.83H164.39 V-12.47H167.58 V30.82H168.52 V-12.47H168.90 V30.82H170.02 V-12.47H171.71 V22.16H173.59 V-12.47H177.53 V41.21H179.22 V31.25H181.29 V99.30H210.94 V47.27H212.63 V41.64H214.51 V33.41H216.39 V-12.47H218.26 V39.91H220.33 V41.21H222.20 V39.91H223.89 V37.74H225.77 V34.28H227.46 V36.88H229.34 V39.47H231.03 V42.94H233.28 V-12.47H235.16 V39.91H239.10 V65.02H240.97 V99.30H268.57" stroke="#0000ff" stroke-opacity="0.88" stroke-width="1.1" fill="none" stroke-linejoin="round" clip-path="url(#cp4)" transform="translate(1.1 0)"/><g transform="translate(1.25 0)"><rect x="185.5" y="21.5" width="14" height="11" fill="#fff" stroke="#ccc" stroke-width="1"/><rect x="187" y="23" width="11" height="8" fill="#0000ff"/></g><path d="M270.35 4.2 L280.25 14.1 L270.35 24 L260.45 14.1Z" fill="#ff0000"/></svg>
<div class="lab" style="left:1514.00px;top:267.00px;letter-spacing:-0.26px;line-height:1">100000</div>
<div class="lab" style="left:1520.74px;top:288.50px;letter-spacing:-0.26px;line-height:1">75000</div>
<div class="lab" style="left:1520.74px;top:310.00px;letter-spacing:-0.26px;line-height:1">50000</div>
<div class="lab" style="left:1520.74px;top:331.50px;letter-spacing:-0.26px;line-height:1">25000</div>
<div class="lab" style="left:1547.70px;top:353.00px;letter-spacing:-0.26px;line-height:1">0</div>
<div class="lab" style="left:1555.30px;top:363px;letter-spacing:-0.4px;line-height:1">0</div>
<div class="lab" style="left:1589.54px;top:363px;letter-spacing:-0.4px;line-height:1">20</div>
<div class="lab" style="left:1627.33px;top:363px;letter-spacing:-0.4px;line-height:1">40</div>
<div class="lab" style="left:1664.62px;top:363px;letter-spacing:-0.4px;line-height:1">60</div>
<div class="lab" style="left:1702.16px;top:363px;letter-spacing:-0.4px;line-height:1">80</div>
<div class="lab" style="left:1736.15px;top:363px;letter-spacing:-0.4px;line-height:1">100</div>
<div class="lab" style="left:1773.69px;top:363px;letter-spacing:-0.4px;line-height:1">120</div>
<div class="leg" style="left:1731.9px;top:280px;color:#808080;letter-spacing:-0.17px;line-height:1">aida04 Stat</div>
<svg class="a" style="left:100px;top:380px" width="290" height="104" viewBox="0.25 0 290 104"><path d="M67.54 14.2 V99.3 M105.08 14.2 V99.3 M142.62 14.2 V99.3 M180.16 14.2 V99.3 M217.70 14.2 V99.3 M255.24 14.2 V99.3 M31 78.44 H271.8 M31 56.79 H271.8 M31 35.14 H271.8" stroke="rgba(120,120,120,0.14)" stroke-width="1" fill="none"/><rect x="30" y="13.2" width="242.8" height="87.1" fill="none" stroke="#808080" stroke-width="2"/><clipPath id="cp5"><rect x="31" y="12.7" width="241" height="88.2"/></clipPath><path d="M30.00 99.30H36.19 V53.33H39.48 V99.30H42.01 V53.33H53.09 V99.30H54.78 V53.33H62.47 V99.30H92.32 V53.33H95.69 V99.30H97.38 V53.33H109.02 V99.30H109.58 V53.33H110.52 V99.30H111.27 V53.33H122.35 V99.30H153.69 V53.33H164.96 V99.30H166.83 V53.33H178.28 V99.30H180.16 V53.33H182.04 V99.30H211.88 V53.33H237.78 V99.30H269.32" stroke="#0000ff" stroke-opacity="0.88" stroke-width="1.1" fill="none" stroke-linejoin="round" clip-path="url(#cp5)" transform="translate(0.25 0)"/><g transform="translate(0.25 0)"><rect x="185.5" y="21.5" width="14" height="11" fill="#fff" stroke="#ccc" stroke-width="1"/><rect x="187" y="23" width="11" height="8" fill="#0000ff"/></g><path d="M270.35 4.2 L280.25 14.1 L270.35 24 L260.45 14.1Z" fill="#ff0000"/></svg>
<div class="lab" style="left:85.00px;top:389.00px;letter-spacing:-0.26px;line-height:1">100000</div>
<div class="lab" style="left:91.74px;top:410.50px;letter-spacing:-0.26px;line-height:1">75000</div>
<div class="lab" style="left:91.74px;top:432.00px;letter-spacing:-0.26px;line-height:1">50000</div>
<div class="lab" style="left:91.74px;top:453.50px;letter-spacing:-0.26px;line-height:1">25000</div>
<div class="lab" style="left:118.70px;top:475.00px;letter-spacing:-0.26px;line-height:1">0</div>
<div class="lab" style="left:126.30px;top:485px;letter-spacing:-0.4px;line-height:1">0</div>
<div class="lab" style="left:160.54px;top:485px;letter-spacing:-0.4px;line-height:1">20</div>
<div class="lab" style="left:198.33px;top:485px;letter-spacing:-0.4px;line-height:1">40</div>
<div class="lab" style="left:235.62px;top:485px;letter-spacing:-0.4px;line-height:1">60</div>
<div class="lab" style="left:273.16px;top:485px;letter-spacing:-0.4px;line-height:1">80</div>
<div class="lab" style="left:307.15px;top:485px;letter-spacing:-0.4px;line-height:1">100</div>
<div class="lab" style="left:344.69px;top:485px;letter-spacing:-0.4px;line-height:1">120</div>
<div class="leg" style="left:302.9px;top:402px;color:#808080;letter-spacing:-0.17px;line-height:1">aida05 Stat</div>
<svg class="a" style="left:576px;top:380px" width="290" height="104" viewBox="0.25 0 290 104"><path d="M67.54 14.2 V99.3 M105.08 14.2 V99.3 M142.62 14.2 V99.3 M180.16 14.2 V99.3 M217.70 14.2 V99.3 M255.24 14.2 V99.3 M31 78.44 H271.8 M31 56.79 H271.8 M31 35.14 H271.8" stroke="rgba(120,120,120,0.14)" stroke-width="1" fill="none"/><rect x="30" y="13.2" width="242.8" height="87.1" fill="none" stroke="#808080" stroke-width="2"/><clipPath id="cp6"><rect x="31" y="12.7" width="241" height="88.2"/></clipPath><path d="M30.00 99.30H32.06 V53.33H62.10 V99.30H91.94 V53.33H117.66 V55.92H119.72 V76.27H121.97 V99.30H151.44 V53.33H179.60 V75.84H181.47 V99.30H211.32 V53.33H241.35 V99.30H268.57" stroke="#0000ff" stroke-opacity="0.88" stroke-width="1.1" fill="none" stroke-linejoin="round" clip-path="url(#cp6)" transform="translate(0.76 0)"/><g transform="translate(0.85 0)"><rect x="185.5" y="21.5" width="14" height="11" fill="#fff" stroke="#ccc" stroke-width="1"/><rect x="187" y="23" width="11" height="8" fill="#0000ff"/></g><path d="M270.35 4.2 L280.25 14.1 L270.35 24 L260.45 14.1Z" fill="#ff0000"/></svg>
<div class="lab" style="left:561.60px;top:389.00px;letter-spacing:-0.26px;line-height:1">100000</div>
<div class="lab" style="left:568.34px;top:410.50px;letter-spacing:-0.26px;line-height:1">75000</div>
<div class="lab" style="left:568.34px;top:432.00px;letter-spacing:-0.26px;line-height:1">50000</div>
<div class="lab" style="left:568.34px;top:453.50px;letter-spacing:-0.26px;line-height:1">25000</div>
<div class="lab" style="left:595.30px;top:475.00px;letter-spacing:-0.26px;line-height:1">0</div>
<div class="lab" style="left:602.90px;top:485px;letter-spacing:-0.4px;line-height:1">0</div>
<div class="lab" style="left:637.14px;top:485px;letter-spacing:-0.4px;line-height:1">20</div>
<div class="lab" style="left:674.93px;top:485px;letter-spacing:-0.4px;line-height:1">40</div>
<div class="lab" style="left:712.22px;top:485px;letter-spacing:-0.4px;line-height:1">60</div>
<div class="lab" style="left:749.76px;top:485px;letter-spacing:-0.4px;line-height:1">80</div>
<div class="lab" style="left:783.75px;top:485px;letter-spacing:-0.4px;line-height:1">100</div>
<div class="lab" style="left:821.29px;top:485px;letter-spacing:-0.4px;line-height:1">120</div>
<div class="leg" style="left:779.5px;top:402px;color:#808080;letter-spacing:-0.17px;line-height:1">aida06 Stat</div>
<svg class="a" style="left:1052px;top:380px" width="290" height="104" viewBox="0.25 0 290 104"><path d="M67.54 14.2 V99.3 M105.08 14.2 V99.3 M142.62 14.2 V99.3 M180.16 14.2 V99.3 M217.70 14.2 V99.3 M255.24 14.2 V99.3 M31 78.44 H271.8 M31 56.79 H271.8 M31 35.14 H271.8" stroke="rgba(120,120,120,0.14)" stroke-width="1" fill="none"/><rect x="30" y="13.2" width="242.8" height="87.1" fill="none" stroke="#808080" stroke-width="2"/><clipPath id="cp7"><rect x="31" y="12.7" width="241" height="88.2"/></clipPath><path d="M30.00 99.30H31.97 V52.03H34.69 V52.89H44.83 V51.16H46.71 V52.89H50.65 V52.20H52.52 V52.89H56.28 V53.76H58.16 V52.89H61.91 V99.30H91.75 V50.73H93.82 V50.30H97.57 V49.43H98.51 V53.33H101.14 V51.16H103.02 V52.89H105.08 V51.60H106.96 V52.89H117.84 V52.03H119.91 V53.33H121.79 V99.30H151.25 V52.63H159.14 V52.20H161.01 V52.63H167.77 V55.06H169.65 V65.88H171.71 V52.89H173.59 V61.12H175.28 V56.79H177.16 V53.33H179.41 V75.40H181.29 V99.30H211.13 V52.20H214.88 V52.89H232.53 V51.77H236.09 V52.89H240.97 V99.30H268.75" stroke="#0000ff" stroke-opacity="0.88" stroke-width="1.1" fill="none" stroke-linejoin="round" clip-path="url(#cp7)" transform="translate(0.93 0)"/><g transform="translate(1.05 0)"><rect x="185.5" y="21.5" width="14" height="11" fill="#fff" stroke="#ccc" stroke-width="1"/><rect x="187" y="23" width="11" height="8" fill="#0000ff"/></g><path d="M270.35 4.2 L280.25 14.1 L270.35 24 L260.45 14.1Z" fill="#ff0000"/></svg>
<div class="lab" style="left:1037.80px;top:389.00px;letter-spacing:-0.26px;line-height:1">100000</div>
<div class="lab" style="left:1044.54px;top:410.50px;letter-spacing:-0.26px;line-height:1">75000</div>
<div class="lab" style="left:1044.54px;top:432.00px;letter-spacing:-0.26px;line-height:1">50000</div>
<div class="lab" style="left:1044.54px;top:453.50px;letter-spacing:-0.26px;line-height:1">25000</div>
<div class="lab" style="left:1071.50px;top:475.00px;letter-spacing:-0.26px;line-height:1">0</div>
<div class="lab" style="left:1079.10px;top:485px;letter-spacing:-0.4px;line-height:1">0</div>
<div class="lab" style="left:1113.34px;top:485px;letter-spacing:-0.4px;line-height:1">20</div>
<div class="lab" style="left:1151.13px;top:485px;letter-spacing:-0.4px;line-height:1">40</div>
<div class="lab" style="left:1188.42px;top:485px;letter-spacing:-0.4px;line-height:1">60</div>
<div class="lab" style="left:1225.96px;top:485px;letter-spacing:-0.4px;line-height:1">80</div>
<div class="lab" style="left:1259.95px;top:485px;letter-spacing:-0.4px;line-height:1">100</div>
<div class="lab" style="left:1297.49px;top:485px;letter-spacing:-0.4px;line-height:1">120</div>
<div class="leg" style="left:1255.7px;top:402px;color:#808080;letter-spacing:-0.17px;line-height:1">aida07 Stat</div>
<svg class="a" style="left:1528px;top:380px" width="290" height="104" viewBox="0.25 0 290 104"><path d="M67.54 14.2 V99.3 M105.08 14.2 V99.3 M142.62 14.2 V99.3 M180.16 14.2 V99.3 M217.70 14.2 V99.3 M255.24 14.2 V99.3 M31 78.44 H271.8 M31 56.79 H271.8 M31 35.14 H271.8" stroke="rgba(120,120,120,0.14)" stroke-width="1" fill="none"/><rect x="30" y="13.2" width="242.8" height="87.1" fill="none" stroke="#808080" stroke-width="2"/><clipPath id="cp8"><rect x="31" y="12.7" width="241" height="88.2"/></clipPath><path d="M30.00 99.30H32.06 V52.03H33.94 V52.89H46.89 V51.60H48.77 V52.89H55.90 V56.79H57.78 V63.72H59.84 V54.19H61.91 V99.30H91.75 V52.89H95.51 V51.77H97.38 V52.89H103.02 V52.03H104.89 V52.89H108.65 V51.77H110.52 V52.89H116.15 V52.03H119.91 V52.89H121.79 V99.30H151.25 V52.89H158.76 V52.03H160.64 V52.89H171.71 V55.92H173.40 V59.39H174.34 V61.98H175.28 V71.51H177.53 V53.33H179.22 V67.18H181.29 V99.30H210.94 V52.89H216.57 V52.03H218.45 V52.89H222.20 V52.03H224.08 V52.89H235.16 V76.27H237.03 V52.46H239.10 V60.25H240.97 V99.30H268.57" stroke="#0000ff" stroke-opacity="0.88" stroke-width="1.1" fill="none" stroke-linejoin="round" clip-path="url(#cp8)" transform="translate(1.1 0)"/><g transform="translate(1.25 0)"><rect x="185.5" y="21.5" width="14" height="11" fill="#fff" stroke="#ccc" stroke-width="1"/><rect x="187" y="23" width="11" height="8" fill="#0000ff"/></g><path d="M270.35 4.2 L280.25 14.1 L270.35 24 L260.45 14.1Z" fill="#ff0000"/></svg>
<div class="lab" style="left:1514.00px;top:389.00px;letter-spacing:-0.26px;line-height:1">100000</div>
<div class="lab" style="left:1520.74px;top:410.50px;letter-spacing:-0.26px;line-height:1">75000</div>
<div class="lab" style="left:1520.74px;top:432.00px;letter-spacing:-0.26px;line-height:1">50000</div>
<div class="lab" style="left:1520.74px;top:453.50px;letter-spacing:-0.26px;line-height:1">25000</div>
<div class="lab" style="left:1547.70px;top:475.00px;letter-spacing:-0.26px;line-height:1">0</div>
<div class="lab" style="left:1555.30px;top:485px;letter-spacing:-0.4px;line-height:1">0</div>
<div class="lab" style="left:1589.54px;top:485px;letter-spacing:-0.4px;line-height:1">20</div>
<div class="lab" style="left:1627.33px;top:485px;letter-spacing:-0.4px;line-height:1">40</div>
<div class="lab" style="left:1664.62px;top:485px;letter-spacing:-0.4px;line-height:1">60</div>
<div class="lab" style="left:1702.16px;top:485px;letter-spacing:-0.4px;line-height:1">80</div>
<div class="lab" style="left:1736.15px;top:485px;letter-spacing:-0.4px;line-height:1">100</div>
<div class="lab" style="left:1773.69px;top:485px;letter-spacing:-0.4px;line-height:1">120</div>
<div class="leg" style="left:1731.9px;top:402px;color:#808080;letter-spacing:-0.17px;line-height:1">aida08 Stat</div>
<svg class="a" style="left:100px;top:502px" width="290" height="104" viewBox="0.25 0 290 104"><path d="M67.54 14.2 V99.3 M105.08 14.2 V99.3 M142.62 14.2 V99.3 M180.16 14.2 V99.3 M217.70 14.2 V99.3 M255.24 14.2 V99.3 M31 78.44 H271.8 M31 56.79 H271.8 M31 35.14 H271.8" stroke="rgba(120,120,120,0.14)" stroke-width="1" fill="none"/><rect x="30" y="13.2" width="242.8" height="87.1" fill="none" stroke="#808080" stroke-width="2"/><clipPath id="cp9"><rect x="31" y="12.7" width="241" height="88.2"/></clipPath><path d="M30.00 99.30H32.63 V46.40H34.50 V39.04H36.57 V50.30H37.88 V51.16H40.14 V52.89H43.70 V49.00H45.95 V52.89H49.52 V48.13H51.40 V52.46H52.71 V51.16H54.40 V52.46H57.22 V47.70H58.91 V52.89H60.41 V47.70H62.47 V99.30H92.32 V38.18H94.38 V43.80H95.88 V40.77H97.95 V44.67H99.45 V50.73H101.33 V52.89H105.46 V51.60H107.14 V52.89H110.71 V49.43H112.59 V52.46H114.47 V52.89H120.66 V53.76H122.35 V99.30H152.00 V52.03H154.63 V52.89H156.32 V52.03H159.14 V52.89H166.27 V51.60H168.33 V52.89H174.34 V43.37H176.41 V35.14H178.28 V49.86H182.04 V99.30H211.88 V34.71H213.20 V32.98H215.45 V17.83H217.51 V-12.47H219.39 V26.05H221.08 V-12.47H222.02 V25.62H223.14 V-12.47H224.83 V26.92H226.71 V15.23H227.46 V-12.47H228.40 V32.55H230.28 V30.82H231.97 V29.08H234.22 V-12.47H235.91 V28.22H237.78 V20.43H239.85 V55.92H241.73 V99.30H269.32" stroke="#0000ff" stroke-opacity="0.88" stroke-width="1.1" fill="none" stroke-linejoin="round" clip-path="url(#cp9)" transform="translate(0.25 0)"/><g transform="translate(0.25 0)"><rect x="185.5" y="21.5" width="14" height="11" fill="#fff" stroke="#ccc" stroke-width="1"/><rect x="187" y="23" width="11" height="8" fill="#0000ff"/></g><path d="M270.35 4.2 L280.25 14.1 L270.35 24 L260.45 14.1Z" fill="#ff0000"/></svg>
<div class="lab" style="left:85.00px;top:511.00px;letter-spacing:-0.26px;line-height:1">100000</div>
<div class="lab" style="left:91.74px;top:532.50px;letter-spacing:-0.26px;line-height:1">75000</div>
<div class="lab" style="left:91.74px;top:554.00px;letter-spacing:-0.26px;line-height:1">50000</div>
<div class="lab" style="left:91.74px;top:575.50px;letter-spacing:-0.26px;line-height:1">25000</div>
<div class="lab" style="left:118.70px;top:597.00px;letter-spacing:-0.26px;line-height:1">0</div>
<div class="lab" style="left:126.30px;top:607px;letter-spacing:-0.4px;line-height:1">0</div>
<div class="lab" style="left:160.54px;top:607px;letter-spacing:-0.4px;line-height:1">20</div>
<div class="lab" style="left:198.33px;top:607px;letter-spacing:-0.4px;line-height:1">40</div>
<div class="lab" style="left:235.62px;top:607px;letter-spacing:-0.4px;line-height:1">60</div>
<div class="lab" style="left:273.16px;top:607px;letter-spacing:-0.4px;line-height:1">80</div>
<div class="lab" style="left:307.15px;top:607px;letter-spacing:-0.4px;line-height:1">100</div>
<div class="lab" style="left:344.69px;top:607px;letter-spacing:-0.4px;line-height:1">120</div>
<div class="leg" style="left:302.9px;top:524px;color:#808080;letter-spacing:-0.17px;line-height:1">aida09 Stat</div>
<svg class="a" style="left:576px;top:502px" width="290" height="104" viewBox="0.25 0 290 104"><path d="M67.54 14.2 V99.3 M105.08 14.2 V99.3 M142.62 14.2 V99.3 M180.16 14.2 V99.3 M217.70 14.2 V99.3 M255.24 14.2 V99.3 M31 78.44 H271.8 M31 56.79 H271.8 M31 35.14 H271.8" stroke="rgba(120,120,120,0.14)" stroke-width="1" fill="none"/><rect x="30" y="13.2" width="242.8" height="87.1" fill="none" stroke="#808080" stroke-width="2"/><clipPath id="cp10"><rect x="31" y="12.7" width="241" height="88.2"/></clipPath><path d="M30.00 99.30H32.06 V36.88H33.94 V19.56H36.01 V21.29H37.51 V-12.47H39.38 V17.40H41.45 V-12.47H43.33 V33.85H45.20 V-12.47H50.65 V24.76H52.34 V29.52H54.21 V-12.47H55.90 V19.56H58.34 V34.71H60.22 V39.04H62.10 V99.30H91.94 V32.55H94.19 V30.82H95.69 V34.28H97.01 V23.02H99.26 V45.10H100.95 V50.30H103.20 V45.10H105.08 V48.13H106.96 V45.53H108.65 V25.62H110.52 V30.82H112.21 V37.31H114.09 V52.03H118.03 V54.63H119.91 V75.40H121.97 V99.30H151.44 V50.30H153.32 V49.43H155.57 V50.30H156.89 V51.60H158.76 V41.21H160.45 V39.04H162.70 V50.73H164.39 V54.63H166.27 V32.98H167.96 V30.82H170.21 V48.13H171.53 V43.37H173.78 V67.18H175.66 V61.98H177.72 V47.27H179.60 V54.63H181.47 V99.30H211.32 V53.33H213.01 V52.46H214.88 V50.30H216.76 V52.03H218.45 V52.89H227.84 V60.25H230.09 V61.12H231.78 V66.31H233.84 V64.15H235.16 V66.31H237.41 V53.76H239.10 V65.02H241.35 V99.30H268.57" stroke="#0000ff" stroke-opacity="0.88" stroke-width="1.1" fill="none" stroke-linejoin="round" clip-path="url(#cp10)" transform="translate(0.76 0)"/><g transform="translate(0.85 0)"><rect x="185.5" y="21.5" width="14" height="11" fill="#fff" stroke="#ccc" stroke-width="1"/><rect x="187" y="23" width="11" height="8" fill="#0000ff"/></g><path d="M270.35 4.2 L280.25 14.1 L270.35 24 L260.45 14.1Z" fill="#ff0000"/></svg>
<div class="lab" style="left:561.60px;top:511.00px;letter-spacing:-0.26px;line-height:1">100000</div>
<div class="lab" style="left:568.34px;top:532.50px;letter-spacing:-0.26px;line-height:1">75000</div>
<div class="lab" style="left:568.34px;top:554.00px;letter-spacing:-0.26px;line-height:1">50000</div>
<div class="lab" style="left:568.34px;top:575.50px;letter-spacing:-0.26px;line-height:1">25000</div>
<div class="lab" style="left:595.30px;top:597.00px;letter-spacing:-0.26px;line-height:1">0</div>
<div class="lab" style="left:602.90px;top:607px;letter-spacing:-0.4px;line-height:1">0</div>
<div class="lab" style="left:637.14px;top:607px;letter-spacing:-0.4px;line-height:1">20</div>
<div class="lab" style="left:674.93px;top:607px;letter-spacing:-0.4px;line-height:1">40</div>
<div class="lab" style="left:712.22px;top:607px;letter-spacing:-0.4px;line-height:1">60</div>
<div class="lab" style="left:749.76px;top:607px;letter-spacing:-0.4px;line-height:1">80</div>
<div class="lab" style="left:783.75px;top:607px;letter-spacing:-0.4px;line-height:1">100</div>
<div class="lab" style="left:821.29px;top:607px;letter-spacing:-0.4px;line-height:1">120</div>
<div class="leg" style="left:779.5px;top:524px;color:#808080;letter-spacing:-0.17px;line-height:1">aida10 Stat</div>
<svg class="a" style="left:1052px;top:502px" width="290" height="104" viewBox="0.25 0 290 104"><path d="M67.54 14.2 V99.3 M105.08 14.2 V99.3 M142.62 14.2 V99.3 M180.16 14.2 V99.3 M217.70 14.2 V99.3 M255.24 14.2 V99.3 M31 78.44 H271.8 M31 56.79 H271.8 M31 35.14 H271.8" stroke="rgba(120,120,120,0.14)" stroke-width="1" fill="none"/><rect x="30" y="13.2" width="242.8" height="87.1" fill="none" stroke="#808080" stroke-width="2"/><clipPath id="cp11"><rect x="31" y="12.7" width="241" height="88.2"/></clipPath><path d="M30.00 99.30H31.97 V53.33H61.91 V99.30H91.75 V53.33H112.40 V54.19H114.28 V53.50H115.97 V54.63H119.91 V75.40H121.79 V99.30H151.25 V53.33H173.59 V62.42H175.66 V53.33H179.41 V75.40H181.29 V99.30H211.13 V53.33H227.46 V56.36H229.53 V53.33H235.16 V74.54H237.03 V53.33H239.10 V63.72H240.97 V99.30H268.75" stroke="#0000ff" stroke-opacity="0.88" stroke-width="1.1" fill="none" stroke-linejoin="round" clip-path="url(#cp11)" transform="translate(0.93 0)"/><g transform="translate(1.05 0)"><rect x="185.5" y="21.5" width="14" height="11" fill="#fff" stroke="#ccc" stroke-width="1"/><rect x="187" y="23" width="11" height="8" fill="#0000ff"/></g><path d="M270.35 4.2 L280.25 14.1 L270.35 24 L260.45 14.1Z" fill="#ff0000"/></svg>
<div class="lab" style="left:1037.80px;top:511.00px;letter-spacing:-0.26px;line-height:1">100000</div>
<div class="lab" style="left:1044.54px;top:532.50px;letter-spacing:-0.26px;line-height:1">75000</div>
<div class="lab" style="left:1044.54px;top:554.00px;letter-spacing:-0.26px;line-height:1">50000</div>
<div class="lab" style="left:1044.54px;top:575.50px;letter-spacing:-0.26px;line-height:1">25000</div>
<div class="lab" style="left:1071.50px;top:597.00px;letter-spacing:-0.26px;line-height:1">0</div>
<div class="lab" style="left:1079.10px;top:607px;letter-spacing:-0.4px;line-height:1">0</div>
<div class="lab" style="left:1113.34px;top:607px;letter-spacing:-0.4px;line-height:1">20</div>
<div class="lab" style="left:1151.13px;top:607px;letter-spacing:-0.4px;line-height:1">40</div>
<div class="lab" style="left:1188.42px;top:607px;letter-spacing:-0.4px;line-height:1">60</div>
<div class="lab" style="left:1225.96px;top:607px;letter-spacing:-0.4px;line-height:1">80</div>
<div class="lab" style="left:1259.95px;top:607px;letter-spacing:-0.4px;line-height:1">100</div>
<div class="lab" style="left:1297.49px;top:607px;letter-spacing:-0.4px;line-height:1">120</div>
<div class="leg" style="left:1255.7px;top:524px;color:#808080;letter-spacing:-0.17px;line-height:1">aida11 Stat</div>
<svg class="a" style="left:1528px;top:502px" width="290" height="104" viewBox="0.25 0 290 104"><path d="M67.54 14.2 V99.3 M105.08 14.2 V99.3 M142.62 14.2 V99.3 M180.16 14.2 V99.3 M217.70 14.2 V99.3 M255.24 14.2 V99.3 M31 78.44 H271.8 M31 56.79 H271.8 M31 35.14 H271.8" stroke="rgba(120,120,120,0.14)" stroke-width="1" fill="none"/><rect x="30" y="13.2" width="242.8" height="87.1" fill="none" stroke="#808080" stroke-width="2"/><clipPath id="cp12"><rect x="31" y="12.7" width="241" height="88.2"/></clipPath><path d="M30.00 99.30H32.06 V53.33H52.71 V53.93H54.40 V53.50H55.90 V54.63H57.78 V61.55H59.84 V53.76H61.91 V99.30H91.75 V53.33H119.91 V54.19H121.79 V99.30H151.25 V53.33H179.22 V56.79H181.29 V99.30H210.94 V53.33H240.97 V99.30H268.57" stroke="#0000ff" stroke-opacity="0.88" stroke-width="1.1" fill="none" stroke-linejoin="round" clip-path="url(#cp12)" transform="translate(1.1 0)"/><g transform="translate(1.25 0)"><rect x="185.5" y="21.5" width="14" height="11" fill="#fff" stroke="#ccc" stroke-width="1"/><rect x="187" y="23" width="11" height="8" fill="#0000ff"/></g><path d="M270.35 4.2 L280.25 14.1 L270.35 24 L260.45 14.1Z" fill="#ff0000"/></svg>
<div class="lab" style="left:1514.00px;top:511.00px;letter-spacing:-0.26px;line-height:1">100000</div>
<div class="lab" style="left:1520.74px;top:532.50px;letter-spacing:-0.26px;line-height:1">75000</div>
<div class="lab" style="left:1520.74px;top:554.00px;letter-spacing:-0.26px;line-height:1">50000</div>
<div class="lab" style="left:1520.74px;top:575.50px;letter-spacing:-0.26px;line-height:1">25000</div>
<div class="lab" style="left:1547.70px;top:597.00px;letter-spacing:-0.26px;line-height:1">0</div>
<div class="lab" style="left:1555.30px;top:607px;letter-spacing:-0.4px;line-height:1">0</div>
<div class="lab" style="left:1589.54px;top:607px;letter-spacing:-0.4px;line-height:1">20</div>
<div class="lab" style="left:1627.33px;top:607px;letter-spacing:-0.4px;line-height:1">40</div>
<div class="lab" style="left:1664.62px;top:607px;letter-spacing:-0.4px;line-height:1">60</div>
<div class="lab" style="left:1702.16px;top:607px;letter-spacing:-0.4px;line-height:1">80</div>
<div class="lab" style="left:1736.15px;top:607px;letter-spacing:-0.4px;line-height:1">100</div>
<div class="lab" style="left:1773.69px;top:607px;letter-spacing:-0.4px;line-height:1">120</div>
<div class="leg" style="left:1731.9px;top:524px;color:#808080;letter-spacing:-0.17px;line-height:1">aida12 Stat</div>
<svg class="a" style="left:100px;top:624px" width="290" height="104" viewBox="0.25 0 290 104"><path d="M67.54 14.2 V99.3 M105.08 14.2 V99.3 M142.62 14.2 V99.3 M180.16 14.2 V99.3 M217.70 14.2 V99.3 M255.24 14.2 V99.3 M31 78.44 H271.8 M31 56.79 H271.8 M31 35.14 H271.8" stroke="rgba(120,120,120,0.14)" stroke-width="1" fill="none"/><rect x="30" y="13.2" width="242.8" height="87.1" fill="none" stroke="#808080" stroke-width="2"/><clipPath id="cp13"><rect x="31" y="12.7" width="241" height="88.2"/></clipPath><path d="M30.00 99.30H32.63 V30.38H36.19 V29.08H38.45 V30.82H39.76 V33.41H42.01 V34.28H44.08 V36.01H45.58 V32.55H47.27 V41.64H49.15 V38.61H50.83 V36.01H53.09 V38.18H54.78 V43.80H56.65 V44.67H58.53 V48.13H60.41 V42.07H62.47 V99.30H92.32 V44.24H95.88 V47.27H97.76 V47.70H100.01 V48.56H101.89 V49.43H103.58 V48.13H105.46 V49.86H107.14 V46.40H109.02 V50.30H110.71 V46.40H112.59 V48.13H114.47 V50.30H116.53 V45.97H118.22 V48.56H120.10 V50.73H121.60 V52.03H122.35 V99.30H152.00 V48.56H153.32 V50.73H155.20 V49.00H157.26 V50.30H159.14 V48.13H160.83 V51.16H162.70 V49.00H164.39 V46.40H166.27 V43.80H168.33 V50.73H170.21 V49.00H175.09 V46.40H176.97 V44.67H179.60 V51.16H182.04 V99.30H211.88 V50.30H213.20 V47.27H215.45 V48.56H217.14 V47.70H219.01 V41.64H220.70 V50.73H222.58 V47.27H224.27 V49.86H226.15 V44.67H227.84 V48.56H229.71 V45.53H233.84 V32.55H235.53 V41.21H237.78 V43.80H239.47 V41.64H241.73 V99.30H269.32" stroke="#0000ff" stroke-opacity="0.88" stroke-width="1.1" fill="none" stroke-linejoin="round" clip-path="url(#cp13)" transform="translate(0.25 0)"/><g transform="translate(0.25 0)"><rect x="185.5" y="21.5" width="14" height="11" fill="#fff" stroke="#ccc" stroke-width="1"/><rect x="187" y="23" width="11" height="8" fill="#0000ff"/></g><path d="M270.35 4.2 L280.25 14.1 L270.35 24 L260.45 14.1Z" fill="#ff0000"/></svg>
<div class="lab" style="left:85.00px;top:633.00px;letter-spacing:-0.26px;line-height:1">100000</div>
<div class="lab" style="left:91.74px;top:654.50px;letter-spacing:-0.26px;line-height:1">75000</div>
<div class="lab" style="left:91.74px;top:676.00px;letter-spacing:-0.26px;line-height:1">50000</div>
<div class="lab" style="left:91.74px;top:697.50px;letter-spacing:-0.26px;line-height:1">25000</div>
<div class="lab" style="left:118.70px;top:719.00px;letter-spacing:-0.26px;line-height:1">0</div>
<div class="lab" style="left:126.30px;top:729px;letter-spacing:-0.4px;line-height:1">0</div>
<div class="lab" style="left:160.54px;top:729px;letter-spacing:-0.4px;line-height:1">20</div>
<div class="lab" style="left:198.33px;top:729px;letter-spacing:-0.4px;line-height:1">40</div>
<div class="lab" style="left:235.62px;top:729px;letter-spacing:-0.4px;line-height:1">60</div>
<div class="lab" style="left:273.16px;top:729px;letter-spacing:-0.4px;line-height:1">80</div>
<div class="lab" style="left:307.15px;top:729px;letter-spacing:-0.4px;line-height:1">100</div>
<div class="lab" style="left:344.69px;top:729px;letter-spacing:-0.4px;line-height:1">120</div>
<div class="leg" style="left:302.9px;top:646px;color:#808080;letter-spacing:-0.17px;line-height:1">aida13 Stat</div>
<svg class="a" style="left:576px;top:624px" width="290" height="104" viewBox="0.25 0 290 104"><path d="M67.54 14.2 V99.3 M105.08 14.2 V99.3 M142.62 14.2 V99.3 M180.16 14.2 V99.3 M217.70 14.2 V99.3 M255.24 14.2 V99.3 M31 78.44 H271.8 M31 56.79 H271.8 M31 35.14 H271.8" stroke="rgba(120,120,120,0.14)" stroke-width="1" fill="none"/><rect x="30" y="13.2" width="242.8" height="87.1" fill="none" stroke="#808080" stroke-width="2"/><clipPath id="cp14"><rect x="31" y="12.7" width="241" height="88.2"/></clipPath><path d="M30.00 99.30H32.06 V37.31H35.63 V35.14H37.13 V32.11H39.38 V38.61H41.07 V39.47H44.64 V38.61H46.52 V36.01H48.58 V39.47H50.08 V36.01H52.34 V39.04H58.16 V36.44H60.22 V40.77H62.10 V99.30H91.94 V36.44H95.69 V37.31H97.38 V35.58H99.26 V37.31H100.95 V35.14H102.83 V37.74H105.46 V38.18H107.14 V37.31H109.02 V38.18H111.65 V37.31H114.47 V38.18H116.15 V36.44H120.10 V37.31H121.97 V99.30H151.44 V35.14H153.13 V37.31H155.01 V36.01H158.76 V26.49H160.83 V28.65H162.70 V34.71H164.39 V33.41H166.27 V31.25H167.96 V29.52H169.84 V38.18H171.90 V31.68H173.78 V32.55H175.66 V26.49H177.91 V31.68H179.60 V26.92H181.47 V99.30H211.32 V29.95H213.01 V32.98H214.88 V36.44H216.57 V32.11H218.45 V34.71H220.70 V31.68H222.58 V33.41H224.27 V29.95H225.77 V35.14H229.34 V30.82H231.40 V35.58H233.28 V37.31H235.34 V33.85H237.22 V34.71H239.10 V35.58H241.35 V99.30H268.57" stroke="#0000ff" stroke-opacity="0.88" stroke-width="1.1" fill="none" stroke-linejoin="round" clip-path="url(#cp14)" transform="translate(0.76 0)"/><g transform="translate(0.85 0)"><rect x="185.5" y="21.5" width="14" height="11" fill="#fff" stroke="#ccc" stroke-width="1"/><rect x="187" y="23" width="11" height="8" fill="#0000ff"/></g><path d="M270.35 4.2 L280.25 14.1 L270.35 24 L260.45 14.1Z" fill="#ff0000"/></svg>
<div class="lab" style="left:561.60px;top:633.00px;letter-spacing:-0.26px;line-height:1">100000</div>
<div class="lab" style="left:568.34px;top:654.50px;letter-spacing:-0.26px;line-height:1">75000</div>
<div class="lab" style="left:568.34px;top:676.00px;letter-spacing:-0.26px;line-height:1">50000</div>
<div class="lab" style="left:568.34px;top:697.50px;letter-spacing:-0.26px;line-height:1">25000</div>
<div class="lab" style="left:595.30px;top:719.00px;letter-spacing:-0.26px;line-height:1">0</div>
<div class="lab" style="left:602.90px;top:729px;letter-spacing:-0.4px;line-height:1">0</div>
<div class="lab" style="left:637.14px;top:729px;letter-spacing:-0.4px;line-height:1">20</div>
<div class="lab" style="left:674.93px;top:729px;letter-spacing:-0.4px;line-height:1">40</div>
<div class="lab" style="left:712.22px;top:729px;letter-spacing:-0.4px;line-height:1">60</div>
<div class="lab" style="left:749.76px;top:729px;letter-spacing:-0.4px;line-height:1">80</div>
<div class="lab" style="left:783.75px;top:729px;letter-spacing:-0.4px;line-height:1">100</div>
<div class="lab" style="left:821.29px;top:729px;letter-spacing:-0.4px;line-height:1">120</div>
<div class="leg" style="left:779.5px;top:646px;color:#808080;letter-spacing:-0.17px;line-height:1">aida14 Stat</div>
<svg class="a" style="left:1052px;top:624px" width="290" height="104" viewBox="0.25 0 290 104"><path d="M67.54 14.2 V99.3 M105.08 14.2 V99.3 M142.62 14.2 V99.3 M180.16 14.2 V99.3 M217.70 14.2 V99.3 M255.24 14.2 V99.3 M31 78.44 H271.8 M31 56.79 H271.8 M31 35.14 H271.8" stroke="rgba(120,120,120,0.14)" stroke-width="1" fill="none"/><rect x="30" y="13.2" width="242.8" height="87.1" fill="none" stroke="#808080" stroke-width="2"/><clipPath id="cp15"><rect x="31" y="12.7" width="241" height="88.2"/></clipPath><path d="M30.00 99.30H31.97 V44.24H33.75 V43.37H41.26 V43.80H43.14 V43.37H51.02 V44.24H52.90 V45.10H54.59 V45.97H56.47 V43.37H60.60 V44.24H61.91 V99.30H91.75 V43.37H98.51 V43.80H100.20 V44.67H102.08 V43.37H103.77 V42.50H107.71 V43.37H109.58 V45.97H111.84 V43.80H113.71 V45.97H115.40 V44.24H117.84 V65.88H119.53 V67.18H121.79 V99.30H151.25 V46.40H152.57 V43.80H154.82 V43.37H158.39 V45.97H160.08 V43.37H161.95 V42.94H167.21 V43.80H169.09 V44.67H171.34 V45.97H173.59 V43.37H177.16 V44.24H179.41 V66.31H181.29 V99.30H211.13 V-12.47H212.82 V44.24H214.70 V42.94H216.39 V-12.47H222.20 V36.01H223.89 V98.35H225.96 V43.80H227.65 V42.50H229.53 V-12.47H235.16 V42.94H240.97 V99.30H268.75" stroke="#0000ff" stroke-opacity="0.88" stroke-width="1.1" fill="none" stroke-linejoin="round" clip-path="url(#cp15)" transform="translate(0.93 0)"/><g transform="translate(1.05 0)"><rect x="185.5" y="21.5" width="14" height="11" fill="#fff" stroke="#ccc" stroke-width="1"/><rect x="187" y="23" width="11" height="8" fill="#0000ff"/></g><path d="M270.35 4.2 L280.25 14.1 L270.35 24 L260.45 14.1Z" fill="#ff0000"/></svg>
<div class="lab" style="left:1037.80px;top:633.00px;letter-spacing:-0.26px;line-height:1">100000</div>
<div class="lab" style="left:1044.54px;top:654.50px;letter-spacing:-0.26px;line-height:1">75000</div>
<div class="lab" style="left:1044.54px;top:676.00px;letter-spacing:-0.26px;line-height:1">50000</div>
<div class="lab" style="left:1044.54px;top:697.50px;letter-spacing:-0.26px;line-height:1">25000</div>
<div class="lab" style="left:1071.50px;top:719.00px;letter-spacing:-0.26px;line-height:1">0</div>
<div class="lab" style="left:1079.10px;top:729px;letter-spacing:-0.4px;line-height:1">0</div>
<div class="lab" style="left:1113.34px;top:729px;letter-spacing:-0.4px;line-height:1">20</div>
<div class="lab" style="left:1151.13px;top:729px;letter-spacing:-0.4px;line-height:1">40</div>
<div class="lab" style="left:1188.42px;top:729px;letter-spacing:-0.4px;line-height:1">60</div>
<div class="lab" style="left:1225.96px;top:729px;letter-spacing:-0.4px;line-height:1">80</div>
<div class="lab" style="left:1259.95px;top:729px;letter-spacing:-0.4px;line-height:1">100</div>
<div class="lab" style="left:1297.49px;top:729px;letter-spacing:-0.4px;line-height:1">120</div>
<div class="leg" style="left:1255.7px;top:646px;color:#808080;letter-spacing:-0.17px;line-height:1">aida15 Stat</div>
<svg class="a" style="left:1528px;top:624px" width="290" height="104" viewBox="0.25 0 290 104"><path d="M67.54 14.2 V99.3 M105.08 14.2 V99.3 M142.62 14.2 V99.3 M180.16 14.2 V99.3 M217.70 14.2 V99.3 M255.24 14.2 V99.3 M31 78.44 H271.8 M31 56.79 H271.8 M31 35.14 H271.8" stroke="rgba(0,0,0,0.2)" stroke-width="1" fill="none"/><rect x="30" y="13.2" width="242.8" height="87.1" fill="none" stroke="#000000" stroke-width="2"/><clipPath id="cp16"><rect x="31" y="12.7" width="241" height="88.2"/></clipPath><path d="M30.00 99.30H32.06 V43.37H33.57 V41.64H35.44 V42.50H37.13 V41.64H39.01 V41.21H41.64 V41.64H43.33 V42.07H46.89 V41.21H48.77 V42.50H50.65 V41.21H52.34 V40.77H54.21 V38.61H55.90 V41.21H57.78 V42.94H61.91 V99.30H91.75 V39.91H93.44 V42.50H95.32 V40.77H97.01 V38.61H98.89 V41.64H100.58 V40.77H103.02 V39.04H104.70 V40.77H107.71 V39.47H109.96 V40.34H112.21 V40.77H114.09 V28.65H115.78 V42.50H118.03 V40.77H119.91 V42.50H121.79 V99.30H151.25 V-12.47H154.63 V20.43H156.70 V-12.47H175.66 V34.28H177.53 V31.25H179.22 V26.49H181.29 V99.30H188.61 V88.39H190.30 V98.78H192.17 V99.30H201.56 V98.78H203.43 V99.30H210.94 V39.91H212.63 V41.21H214.51 V39.91H216.39 V41.64H222.20 V38.61H223.89 V41.21H225.77 V-12.47H227.84 V42.07H229.71 V40.77H232.90 V49.86H234.97 V45.53H236.47 V44.24H239.10 V42.07H240.97 V99.30H268.57" stroke="#0000ff" stroke-opacity="0.88" stroke-width="1.1" fill="none" stroke-linejoin="round" clip-path="url(#cp16)" transform="translate(1.1 0)"/><g transform="translate(1.25 0)"><rect x="185.5" y="21.5" width="14" height="11" fill="#fff" stroke="#ccc" stroke-width="1"/><rect x="187" y="23" width="11" height="8" fill="#0000ff"/></g><path d="M270.35 4.2 L280.25 14.1 L270.35 24 L260.45 14.1Z" fill="#00ff00"/></svg>
<div class="lab" style="left:1514.00px;top:633.00px;letter-spacing:-0.26px;line-height:1">100000</div>
<div class="lab" style="left:1520.74px;top:654.50px;letter-spacing:-0.26px;line-height:1">75000</div>
<div class="lab" style="left:1520.74px;top:676.00px;letter-spacing:-0.26px;line-height:1">50000</div>
<div class="lab" style="left:1520.74px;top:697.50px;letter-spacing:-0.26px;line-height:1">25000</div>
<div class="lab" style="left:1547.70px;top:719.00px;letter-spacing:-0.26px;line-height:1">0</div>
<div class="lab" style="left:1555.30px;top:729px;letter-spacing:-0.4px;line-height:1">0</div>
<div class="lab" style="left:1589.54px;top:729px;letter-spacing:-0.4px;line-height:1">20</div>
<div class="lab" style="left:1627.33px;top:729px;letter-spacing:-0.4px;line-height:1">40</div>
<div class="lab" style="left:1664.62px;top:729px;letter-spacing:-0.4px;line-height:1">60</div>
<div class="lab" style="left:1702.16px;top:729px;letter-spacing:-0.4px;line-height:1">80</div>
<div class="lab" style="left:1736.15px;top:729px;letter-spacing:-0.4px;line-height:1">100</div>
<div class="lab" style="left:1773.69px;top:729px;letter-spacing:-0.4px;line-height:1">120</div>
<div class="leg" style="left:1731.9px;top:646px;color:#000000;letter-spacing:-0.17px;line-height:1">aida16 Stat</div>
</div></body></html>
